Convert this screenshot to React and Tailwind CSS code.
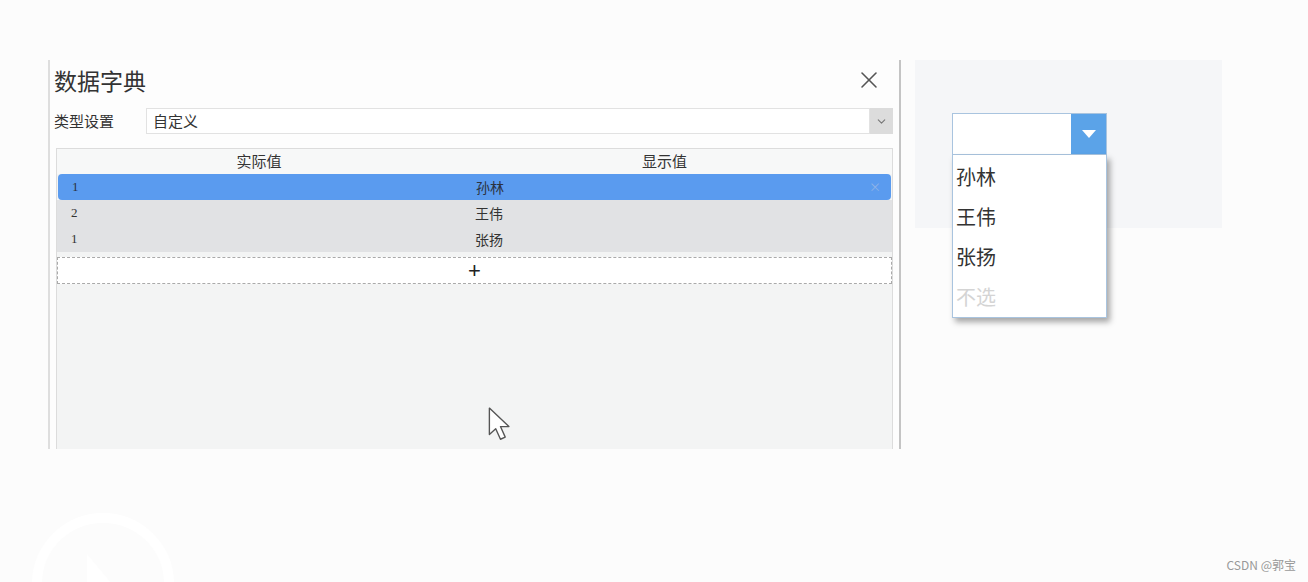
import { X, ChevronDown } from "lucide-react"

const cjk = { fontFamily: '"Noto Sans CJK SC", "Noto Sans", sans-serif' }

const rows = [
  { value: "1", label: "孙林", active: true },
  { value: "2", label: "王伟" },
  { value: "1", label: "张扬" },
]

const Cursor = () => (
  <svg width="28" height="38" viewBox="0 0 26 36" className="absolute left-[487px] top-[406px]">
    <path
      d="M2 2 L2 27 L8 21.5 L12.5 31.5 L17 29.5 L12.5 19.5 L20.5 19.5 Z"
      fill="#fff"
      stroke="#555"
      strokeWidth="1.3"
      strokeLinejoin="round"
    />
  </svg>
)

const DictDialog = () => (
  <div className="w-[853px] h-[389px] flex flex-col border-l-2 border-r-2 border-l-[#dedede] border-r-[#c4c4c4] bg-[#fdfdfd] overflow-hidden">
    <div className="h-[44px] shrink-0 flex items-center justify-between pl-[4px] pr-[16px] pb-[4px]">
      <span className="text-[23px] text-[#333]">数据字典</span>
      <X size={28} strokeWidth={1.3} className="text-[#555]" />
    </div>
    <div className="flex shrink-0 items-center h-[26px] mt-[4px] pl-[4px] pr-[6px]">
      <span className="w-[92px] text-[15px] text-[#333]">类型设置</span>
      <div className="flex-1 h-full flex items-center border border-[#e2e2e2] bg-white pl-[6px] text-[15px] text-[#333]">
        自定义
      </div>
      <div className="w-[23px] h-full flex items-center justify-center bg-[#dcdcdc]">
        <ChevronDown size={13} strokeWidth={2} className="text-[#777]" />
      </div>
    </div>
    <div className="h-[320px] shrink-0 mt-[14px] ml-[6px] mr-[6px] border border-[#dcdcdc] bg-[#f3f4f4] flex flex-col">
      <div className="h-[25px] flex items-center bg-[#f7f8f8] text-[15px] text-[#333]">
        <div className="w-[404px] text-center">实际值</div>
        <div className="flex-1 text-center pr-[24px]">显示值</div>
      </div>
      {rows.map((r, i) => (
        <div
          key={i}
          className={
            r.active
              ? "h-[26px] flex items-center bg-[#5a9bef] rounded-[4px] mx-[1px] text-[14px] text-[#2c3340]"
              : "h-[26px] flex items-center bg-[#e1e2e4] text-[14px] text-[#333]"
          }
        >
          <div className="w-[403px] pl-[14px] text-[13px] font-['Liberation_Serif',serif]">{r.value}</div>
          <div className="flex-1 pl-[15px]">{r.label}</div>
          {r.active && <span className="pr-[10px] text-[12px] text-[#8fb3e8]">×</span>}
        </div>
      ))}
      <div className="h-[27px] mt-[5px] flex items-center bg-white border border-dashed border-[#aaa]">
        <div className="w-[403px]" />
        <span className="pl-[7px] text-[22px] leading-none text-[#222] font-['Liberation_Sans',sans-serif]">+</span>
      </div>
    </div>
  </div>
)

const ComboPreview = () => (
  <div className="ml-[14px] w-[307px] h-[168px] bg-[#f5f6f8] relative">
    <div className="absolute left-[37px] top-[53px] w-[155px] flex flex-col">
      <div className="h-[42px] flex border border-[#a9c4df] bg-white">
        <div className="flex-1" />
        <div className="w-[35px] flex items-center justify-center bg-[#5ba3e8]">
          <svg width="14" height="8" viewBox="0 0 14 8">
            <path d="M0 0 H14 L7 8 Z" fill="#fff" />
          </svg>
        </div>
      </div>
      <div className="h-[163px] border border-t-0 border-[#a9c4df] bg-white shadow-[3px_4px_6px_rgba(0,0,0,0.35)] flex flex-col pt-[2px] pl-[3px] text-[20px] leading-[40px]">
        <span className="text-[#333]">孙林</span>
        <span className="text-[#333]">王伟</span>
        <span className="text-[#333]">张扬</span>
        <span className="text-[#d4d4d4]">不选</span>
      </div>
    </div>
  </div>
)

export default function App() {
  return (
    <div style={cjk} className="w-[1308px] h-[582px] bg-[#fcfcfc] relative overflow-hidden">
      <div className="flex items-start pt-[60px] pl-[48px]">
        <DictDialog />
        <ComboPreview />
      </div>
      <Cursor />
      <svg width="180" height="110" viewBox="0 0 180 110" className="absolute left-[15px] top-[492px]">
        <circle cx="88" cy="92" r="66" fill="none" stroke="#ffffff" strokeWidth="10" />
        <path d="M72 62 L72 110 L112 110 Z" fill="#ffffff" />
      </svg>
      <span className="absolute right-[12px] bottom-[8px] text-[12px] text-[#999]">CSDN @郭宝</span>
    </div>
  )
}
